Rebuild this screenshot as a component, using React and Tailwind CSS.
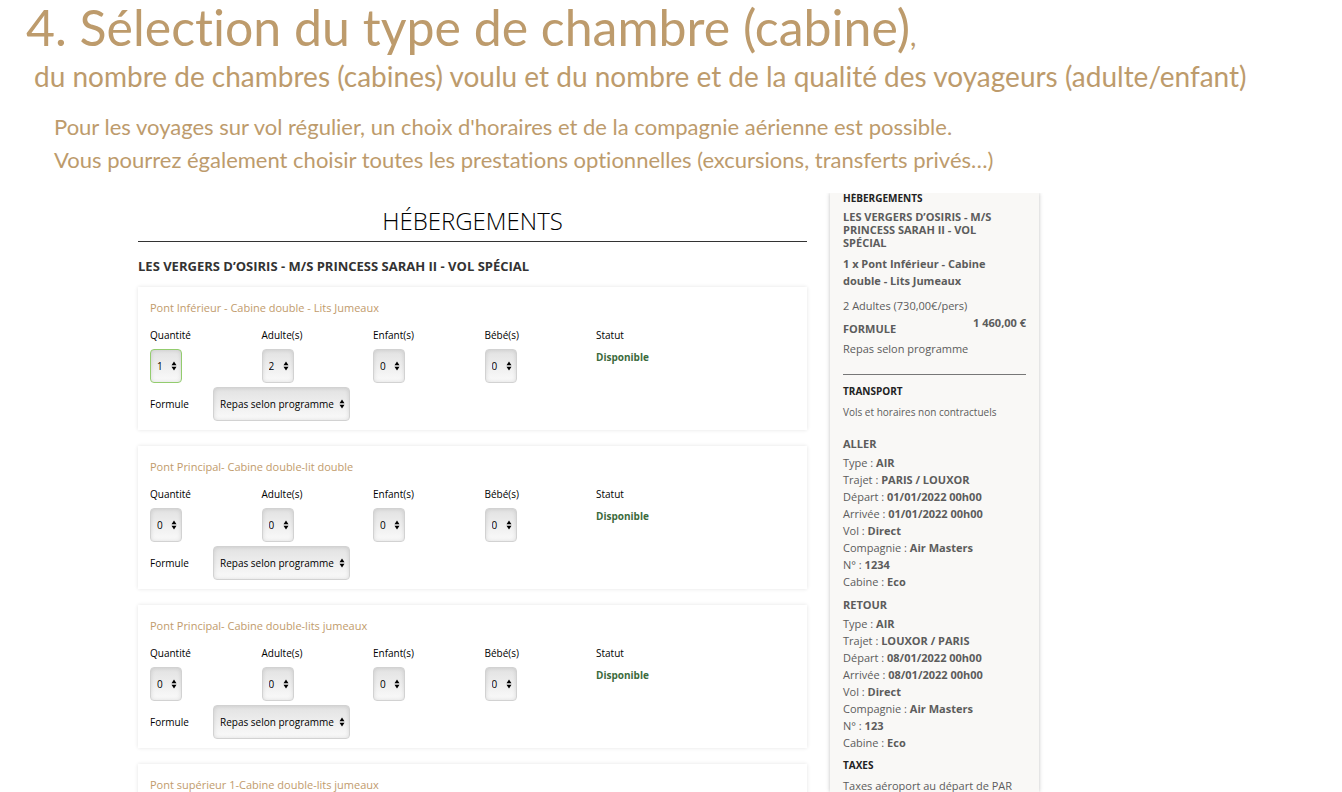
import React from "react";

const QUANTITIES = [0, 1, 2, 3, 4];

const cabins = [
  { id: "inf-jumeaux", name: "Pont Inférieur - Cabine double - Lits Jumeaux", quantity: 1, adults: 2 },
  { id: "pri-double", name: "Pont Principal- Cabine double-lit double", quantity: 0, adults: 0 },
  { id: "pri-jumeaux", name: "Pont Principal- Cabine double-lits jumeaux", quantity: 0, adults: 0 },
];

const flights = [
  {
    title: "ALLER",
    rows: [
      ["Type", "AIR"],
      ["Trajet", "PARIS / LOUXOR"],
      ["Départ", "01/01/2022 00h00"],
      ["Arrivée", "01/01/2022 00h00"],
      ["Vol", "Direct"],
      ["Compagnie", "Air Masters"],
      ["N°", "1234"],
      ["Cabine", "Eco"],
    ],
  },
  {
    title: "RETOUR",
    rows: [
      ["Type", "AIR"],
      ["Trajet", "LOUXOR / PARIS"],
      ["Départ", "08/01/2022 00h00"],
      ["Arrivée", "08/01/2022 00h00"],
      ["Vol", "Direct"],
      ["Compagnie", "Air Masters"],
      ["N°", "123"],
      ["Cabine", "Eco"],
    ],
  },
];

const Select = ({ id, active, className, children, ...props }) => (
  <div className={`relative ${className}`}>
    <select
      id={id}
      className={`block h-[34px] w-full appearance-none rounded border bg-linear-to-b from-[#e2e2e2] to-[#fafafa] pl-1.5 text-[10px] text-black shadow-[inset_0_0_4px_rgba(0,0,0,0.12)] ${
        active ? "border-[#93cc6e]" : "border-[#d2d2d2]"
      }`}
      {...props}
    >
      {children}
    </select>
    <svg
      viewBox="0 0 6 10"
      className="pointer-events-none absolute top-3 right-[5px] h-2.5 w-1.5"
      aria-hidden="true"
    >
      <path d="M3 0.5 L5.5 4.2 H0.5 Z M3 9.5 L5.5 5.8 H0.5 Z" fill="#000" />
    </svg>
  </div>
);

const QuantityField = ({ id, label, value, active }) => (
  <div className="px-3">
    <label htmlFor={id} className="mb-1.5 block">
      {label}
    </label>
    <Select id={id} active={active} defaultValue={value} className="w-8">
      {QUANTITIES.map((n) => (
        <option key={n} value={n}>
          {n}
        </option>
      ))}
    </Select>
  </div>
);

const Card = ({ title, children }) => (
  <article className="mb-4 bg-white pt-3 pb-[9px] shadow-[0_0_4px_rgba(0,0,0,0.11)]">
    <h4 className="px-3 text-[11px] leading-[18px] text-[#c19b6c]">{title}</h4>
    {children}
  </article>
);

const CabinCard = ({ cabin }) => (
  <Card title={cabin.name}>
    <div className="mt-2.5 grid grid-cols-6 text-[10px] leading-4 text-black">
      <QuantityField
        id={`${cabin.id}-qty`}
        label="Quantité"
        value={cabin.quantity}
        active={cabin.quantity > 0}
      />
      <QuantityField id={`${cabin.id}-adt`} label="Adulte(s)" value={cabin.adults} />
      <QuantityField id={`${cabin.id}-chd`} label="Enfant(s)" value={0} />
      <QuantityField id={`${cabin.id}-inf`} label="Bébé(s)" value={0} />
      <div className="px-3">
        <p className="mb-1.5">Statut</p>
        <p className="font-bold text-[#3c6b3c]">Disponible</p>
      </div>
    </div>
    <div className="mt-1 flex items-center px-3 text-[10px]">
      <label htmlFor={`${cabin.id}-formule`} className="w-[63px]">
        Formule
      </label>
      <Select id={`${cabin.id}-formule`} className="w-[137px]">
        <option>Repas selon programme</option>
      </Select>
    </div>
  </Card>
);

const Summary = () => (
  <aside className="w-[209px] shrink-0 bg-[#f9f8f6] px-[13px] text-[11px] leading-[17px] text-[#5c5c5c] shadow-[0_0_4px_rgba(0,0,0,0.25)]">
    <h3 className="text-[10px] leading-[10px] font-bold text-[#222]">HÉBERGEMENTS</h3>
    <h4 className="mt-[7px] pr-6 leading-[13px] font-bold">
      LES VERGERS D’OSIRIS - M/S PRINCESS SARAH II - VOL SPÉCIAL
    </h4>
    <p className="mt-1.5 pr-6 font-bold">1 x Pont Inférieur - Cabine double - Lits Jumeaux</p>
    <p className="mt-2">2 Adultes (730,00€/pers)</p>
    <div className="flex justify-between">
      <h4 className="mt-1.5 font-bold">FORMULE</h4>
      <p className="font-bold">1 460,00 €</p>
    </div>
    <p className="mt-[3px]">Repas selon programme</p>
    <hr className="mt-[17px] border-[#777]" />
    <h3 className="mt-2 text-[10px] font-bold text-[#222]">TRANSPORT</h3>
    <p className="mt-1 text-[10px]">Vols et horaires non contractuels</p>
    <div className="mt-3.5">
      {flights.map((flight) => (
        <section key={flight.title} className="mb-1.5">
          <h4 className="mb-0.5 font-bold">{flight.title}</h4>
          {flight.rows.map(([label, value]) => (
            <p key={label}>
              {label} : <b className="font-bold">{value}</b>
            </p>
          ))}
        </section>
      ))}
    </div>
    <h3 className="text-[10px] font-bold text-[#222]">TAXES</h3>
    <p className="mt-[3px] whitespace-nowrap">Taxes aéroport au départ de PAR</p>
  </aside>
);

const App = () => {
  return (
    <div className="flex h-screen flex-col overflow-hidden bg-white font-['Open_Sans',sans-serif]">
      <header className="font-['Lato',sans-serif] text-[#bd9b6c] [font-variant-ligatures:none]">
        <h1 className="pl-[26px] text-[50px] leading-[54px]">
          4. Sélection du type de chambre (cabine)<span className="text-[28px] leading-none">,</span>
        </h1>
        <h2 className="pl-[34px] text-[28px] leading-[44px] whitespace-nowrap">
          du nombre de chambres (cabines) voulu et du nombre et de la qualité des voyageurs
          (adulte/enfant)
        </h2>
        <div className="mt-3 pl-[54px] text-[22px] leading-[33px]">
          <p>Pour les voyages sur vol régulier, un choix d'horaires et de la compagnie aérienne est possible.</p>
          <p>Vous pourrez également choisir toutes les prestations optionnelles (excursions, transferts privés…)</p>
        </div>
      </header>

      <div className="mt-[17px] flex min-h-0 flex-1 gap-[23px] overflow-hidden pr-[303px] pl-[138px]">
        <main className="min-w-0 flex-1">
          <h2 className="border-b border-[#333] pt-3 pb-1 text-center text-[24px] leading-8 font-light text-black">
            HÉBERGEMENTS
          </h2>
          <h3 className="mt-[15px] mb-3 text-[13px] leading-[18px] font-bold text-[#333]">
            LES VERGERS D’OSIRIS - M/S PRINCESS SARAH II - VOL SPÉCIAL
          </h3>
          {cabins.map((cabin) => (
            <CabinCard key={cabin.id} cabin={cabin} />
          ))}
          <Card title="Pont supérieur 1-Cabine double-lits jumeaux" />
        </main>
        <Summary />
      </div>
    </div>
  );
};

export default App;
